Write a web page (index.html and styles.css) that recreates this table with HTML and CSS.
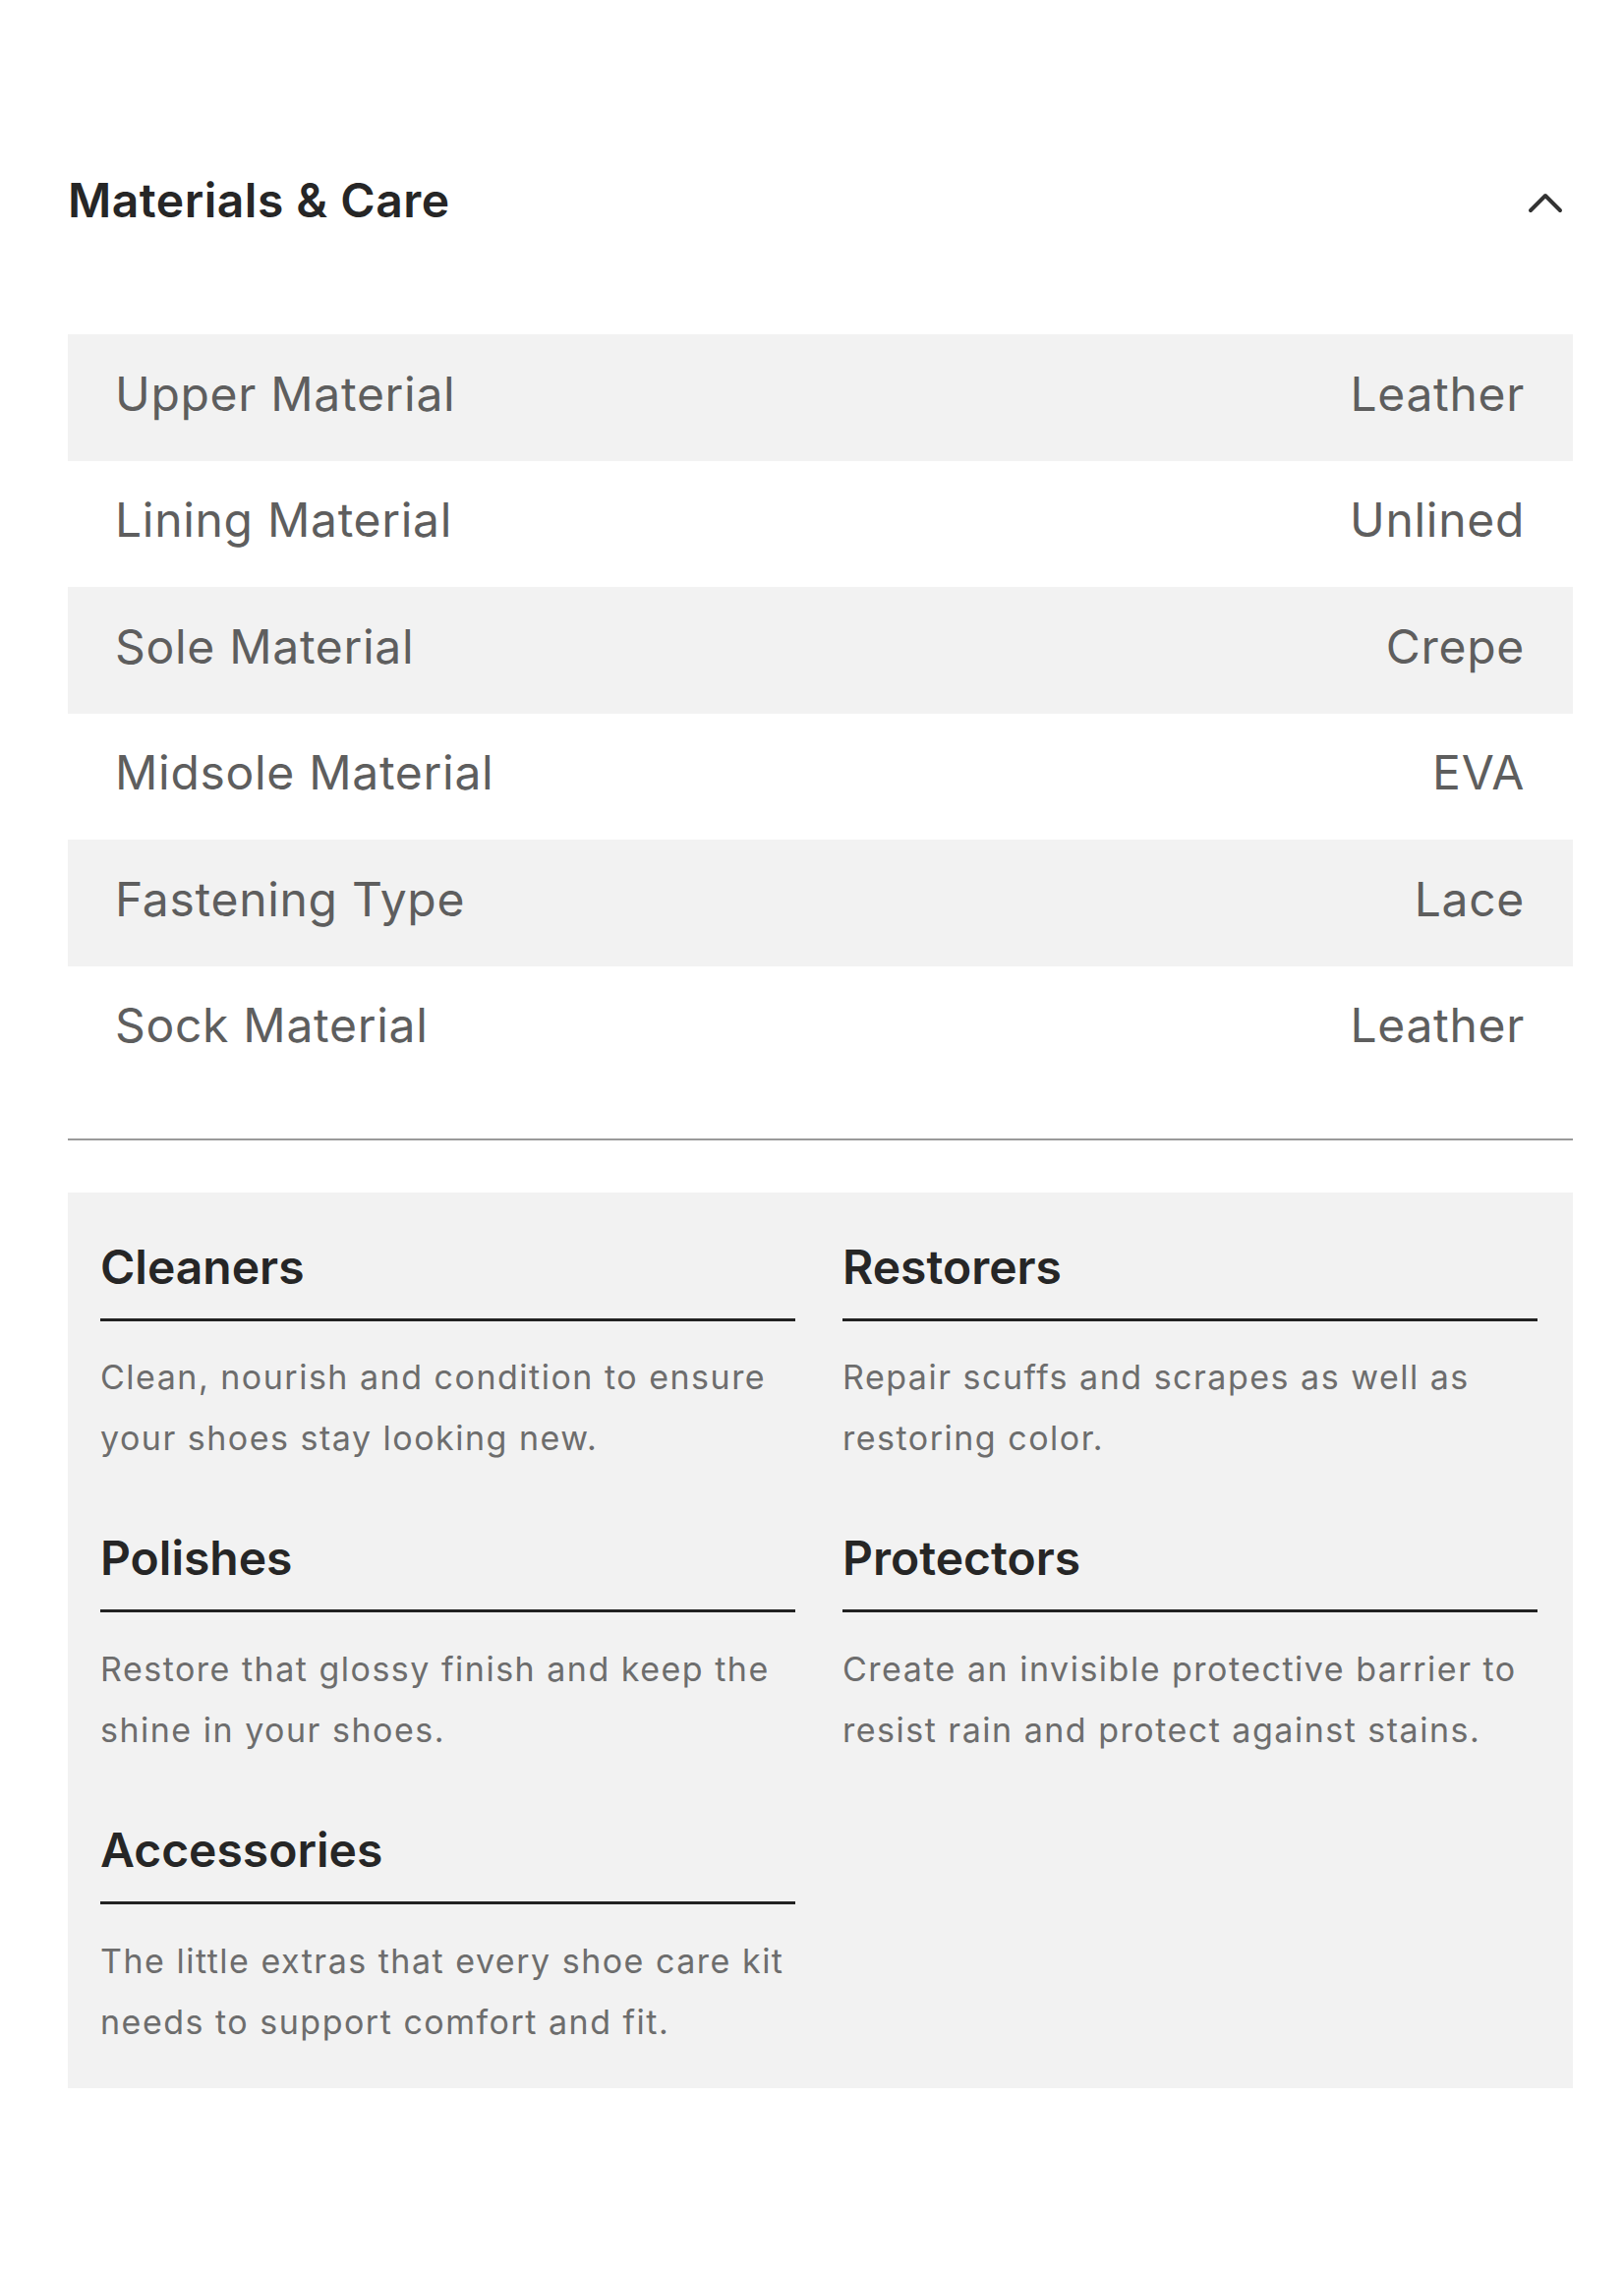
FILE: index.html
```html
<!DOCTYPE html>
<html lang="en">
<head>
<meta charset="utf-8">
<title>Materials &amp; Care</title>
<link rel="stylesheet" href="styles.css">
</head>
<body>
<main class="panel">
  <header class="panel-header">
    <h2 class="panel-title">Materials &amp; Care</h2>
    <button class="toggle" type="button" aria-label="Collapse">
      <svg width="36" height="22" viewBox="0 0 36 22" aria-hidden="true"><polyline points="3,19 18,4 33,19" fill="none" stroke="#333" stroke-width="4" stroke-linecap="round" stroke-linejoin="round"/></svg>
    </button>
  </header>

  <dl class="spec-table">
    <div class="spec-row"><dt>Upper Material</dt><dd>Leather</dd></div>
    <div class="spec-row"><dt>Lining Material</dt><dd>Unlined</dd></div>
    <div class="spec-row"><dt>Sole Material</dt><dd>Crepe</dd></div>
    <div class="spec-row"><dt>Midsole Material</dt><dd>EVA</dd></div>
    <div class="spec-row"><dt>Fastening Type</dt><dd>Lace</dd></div>
    <div class="spec-row"><dt>Sock Material</dt><dd>Leather</dd></div>
  </dl>

  <hr class="divider">

  <section class="care-grid">
    <article class="care-item">
      <h3 class="care-title">Cleaners</h3>
      <p class="care-text">Clean, nourish and condition to ensure your shoes stay looking new.</p>
    </article>
    <article class="care-item">
      <h3 class="care-title">Restorers</h3>
      <p class="care-text">Repair scuffs and scrapes as well as restoring color.</p>
    </article>
    <article class="care-item">
      <h3 class="care-title">Polishes</h3>
      <p class="care-text">Restore that glossy finish and keep the shine in your shoes.</p>
    </article>
    <article class="care-item">
      <h3 class="care-title">Protectors</h3>
      <p class="care-text">Create an invisible protective barrier to resist rain and protect against stains.</p>
    </article>
    <article class="care-item">
      <h3 class="care-title">Accessories</h3>
      <p class="care-text">The little extras that every shoe care kit needs to support comfort and fit.</p>
    </article>
  </section>
</main>
</body>
</html>
```

FILE: styles.css
```css
* { box-sizing: border-box; }

body {
  margin: 0;
  background: #ffffff;
  font-family: Inter, "Noto Sans", "DejaVu Sans", sans-serif;
}

.panel {
  padding: 174.5px 52px 0 69px;
}

.panel-header {
  display: flex;
  justify-content: space-between;
  align-items: center;
  height: 58px;
  margin-bottom: 107.5px;
}

.panel-title {
  margin: 0;
  font-size: 48px;
  line-height: 58px;
  font-weight: 600;
  color: #262626;
  letter-spacing: 0.5px;
}

.toggle {
  border: 0;
  background: none;
  padding: 0;
  margin: 5px 10px 0 0;
  width: 36px;
  height: 22px;
  cursor: pointer;
}

.toggle svg { display: block; }

.spec-table { margin: 0; }

.spec-row {
  display: flex;
  justify-content: space-between;
  height: 128.5px;
  padding: 31.5px 49px 0 48px;
  font-size: 48px;
  line-height: 58px;
  font-weight: 400;
  letter-spacing: 0.7px;
  color: #5e5e5e;
}

.spec-row:nth-child(odd) { background: #f2f2f2; }

.spec-row dt,
.spec-row dd { margin: 0; }

.divider {
  margin: 46.5px 0 0;
  border: 0;
  height: 2.5px;
  background: #9a9a9a;
}

.care-grid {
  margin-top: 52.5px;
  display: grid;
  grid-template-columns: 1fr 1fr;
  column-gap: 48px;
  row-gap: 62.4px;
  padding: 47px 36px 36px 33px;
  background: #f2f2f2;
}

.care-title {
  margin: 0;
  font-size: 48px;
  line-height: 58px;
  font-weight: 600;
  color: #262626;
  padding-bottom: 23px;
  border-bottom: 3px solid #222222;
}

.care-text {
  margin: 26.6px 0 0;
  font-size: 34px;
  line-height: 62px;
  letter-spacing: 1.5px;
  color: #6d6d6d;
}
```
